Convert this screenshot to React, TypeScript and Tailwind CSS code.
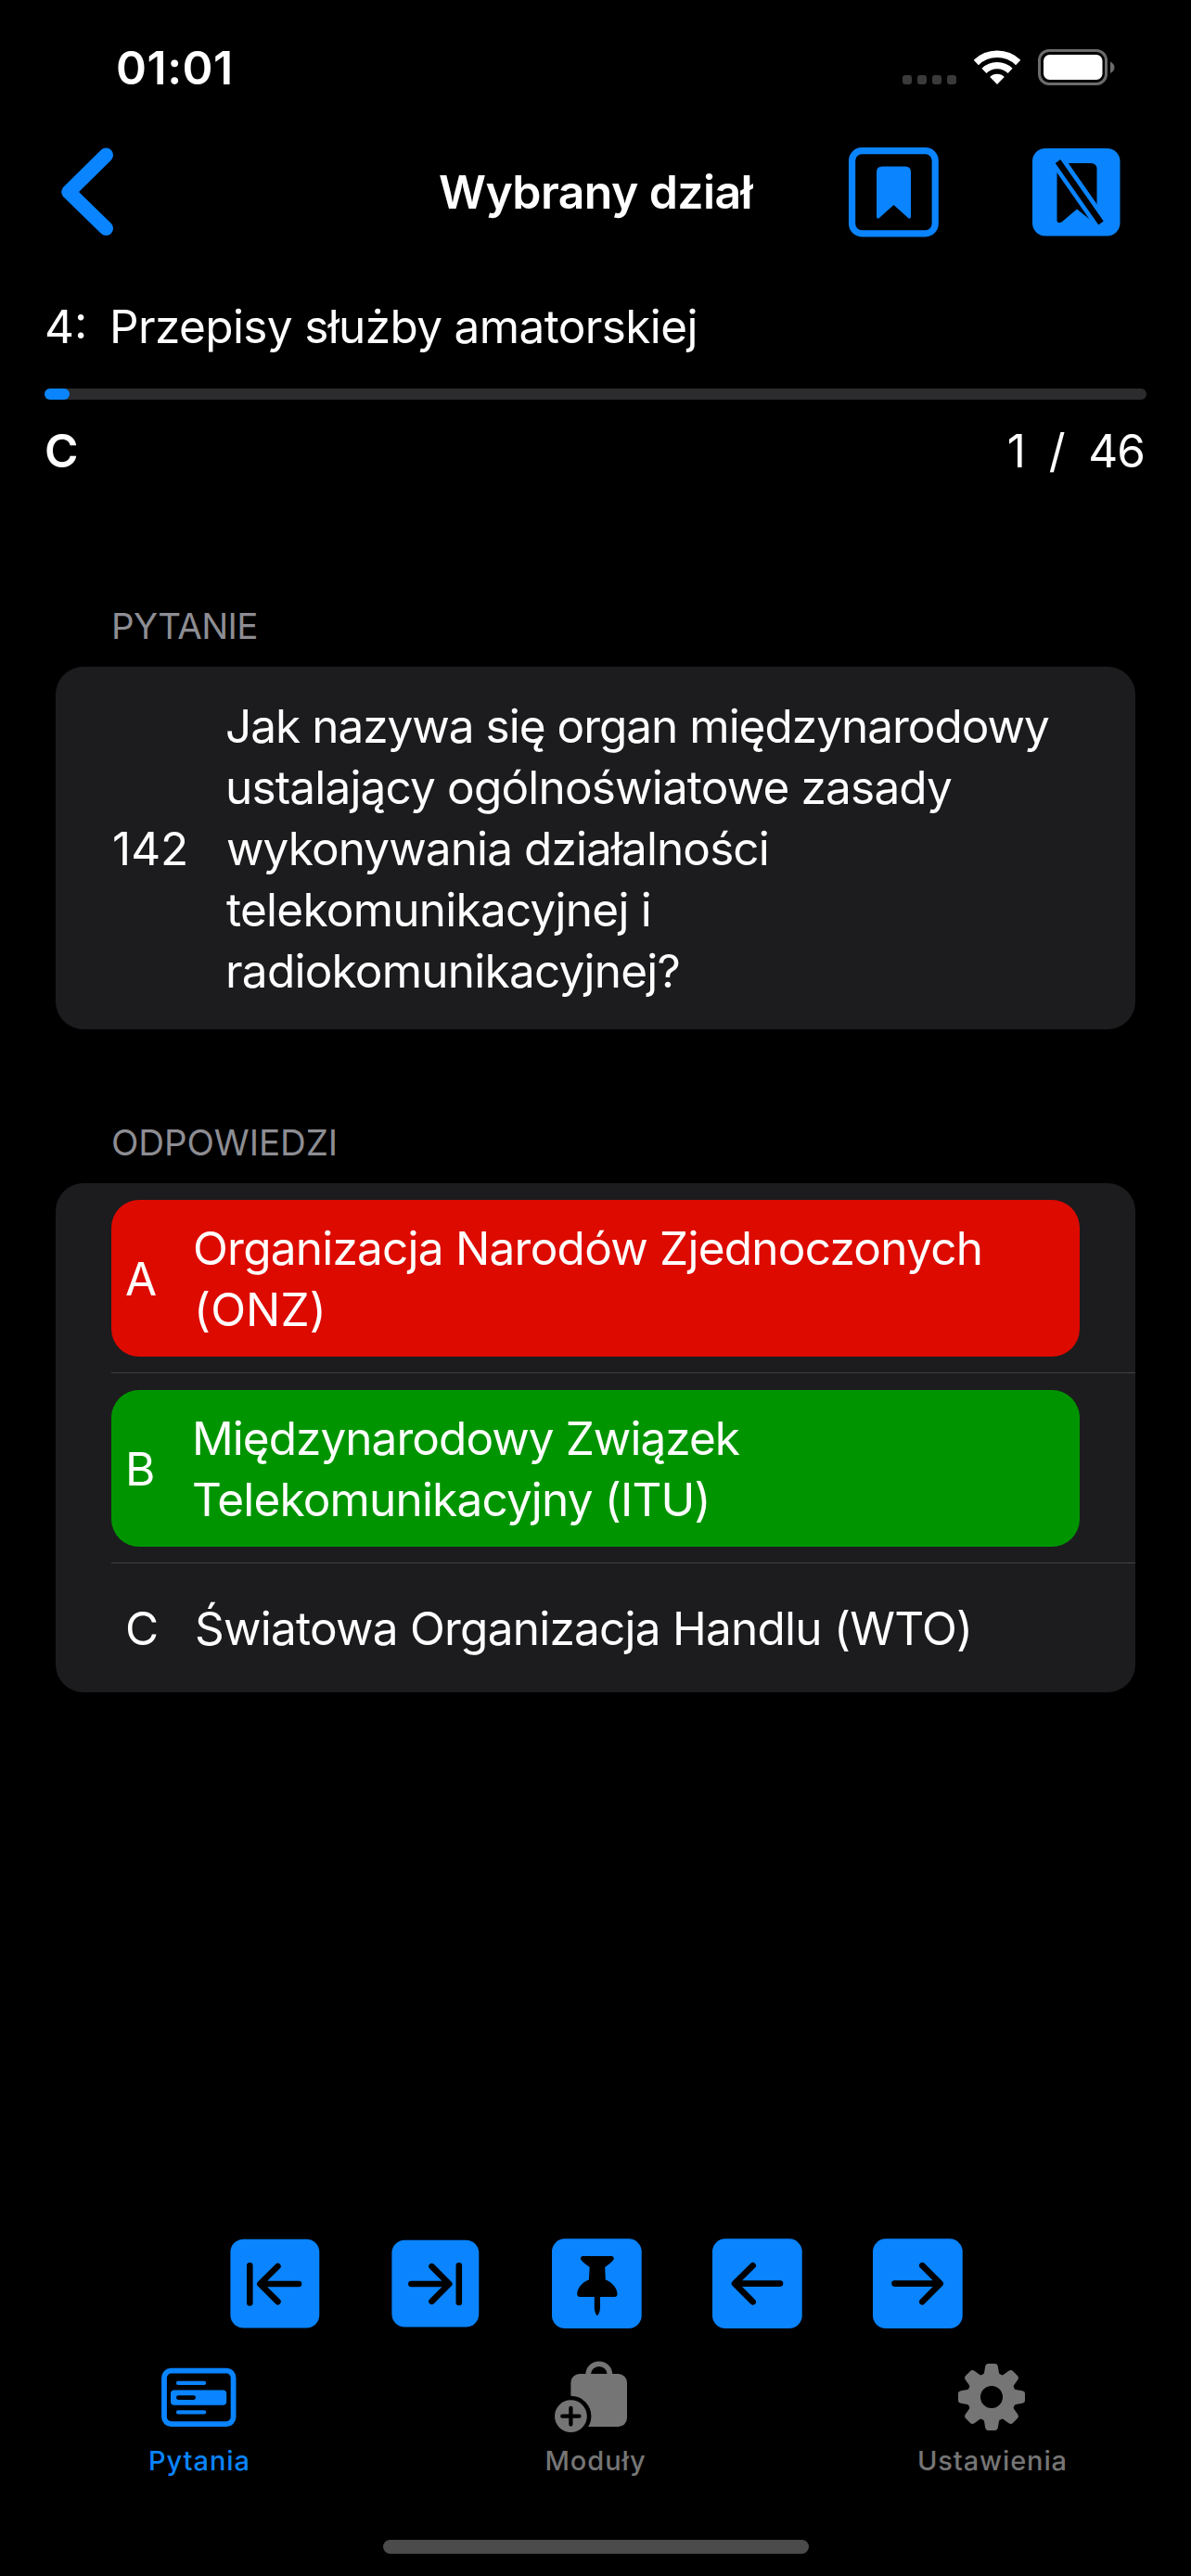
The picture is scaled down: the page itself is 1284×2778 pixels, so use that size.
import type { ReactNode } from "react";

const BLUE = "#0a84ff";
const GRAY = "#757575";

function WifiIcon() {
  return (
    <svg width="52" height="38" viewBox="0 0 52 38" fill="none" stroke="#fff">
      <path d="M3.3 13.5A32.7 32.7 0 0 1 48.7 13.5" strokeWidth="7.5" />
      <path d="M11.9 22.4A20.3 20.3 0 0 1 40.1 22.4" strokeWidth="7.2" />
      <path d="M26 37L18.2 28.9A11.3 11.3 0 0 1 33.8 28.9Z" fill="#fff" stroke="none" />
    </svg>
  );
}

function BatteryIcon() {
  return (
    <svg width="83" height="39" viewBox="0 0 83 39">
      <rect x="1.5" y="1.5" width="72" height="36" rx="10.5" fill="none" stroke="#6b6b6b" strokeWidth="3" />
      <rect x="6" y="6" width="63.5" height="27" rx="6.5" fill="#fff" />
      <path d="M78 13.5C84 16 84 23.5 78 26Z" fill="#6b6b6b" />
    </svg>
  );
}

function StatusBar() {
  return (
    <div className="flex h-[157px] items-start justify-between pt-12 pr-[82px] pl-[125px] text-white">
      <span className="text-[50px] leading-[50px] font-semibold tracking-[0.5px]">01:01</span>
      <div className="flex h-11 items-end">
        <div className="mb-px flex gap-1.5">
          {[0, 1, 2, 3].map((i) => (
            <span key={i} className="size-[10px] rounded-[3px] bg-[#3a3a3a]" />
          ))}
        </div>
        <div className="ml-[18px] flex items-end gap-[18px]">
          <WifiIcon />
          <BatteryIcon />
        </div>
      </div>
    </div>
  );
}

function BackIcon() {
  return (
    <svg width="60" height="98" viewBox="0 0 60 98" fill="none" stroke={BLUE} strokeWidth="15.5" strokeLinecap="round" strokeLinejoin="round">
      <path d="M50.3 9.3L10 49L50.3 88.3" />
    </svg>
  );
}

function BookmarkIcon() {
  return (
    <svg width="97" height="97" viewBox="0 0 97 97" fill={BLUE}>
      <rect x="3.6" y="3.6" width="89.6" height="89.2" rx="10.5" fill="none" stroke={BLUE} strokeWidth="7.2" />
      <path d="M36 20.5H61Q67 20.5 67 26.5V74Q67 78.5 63.5 75.5L48.5 62L33.5 75.5Q30 78.5 30 74V26.5Q30 20.5 36 20.5Z" />
    </svg>
  );
}

function BookmarkSlashIcon() {
  return (
    <svg width="95" height="95" viewBox="0 0 95 95">
      <rect width="94.5" height="94.5" rx="14" fill={BLUE} />
      <path d="M32.5 16H63Q69.5 16 69.5 22.5V76Q69.5 81.5 65 79L48 65.5L31.5 79.5Q26.5 82 26.5 77V22Q26.5 16 32.5 16Z" fill="#000" />
      <path d="M22.5 6.5L77.5 85.5" stroke={BLUE} strokeWidth="16" />
      <path d="M27.5 14L74 80.5" stroke="#000" strokeWidth="6.6" />
    </svg>
  );
}

function Header() {
  return (
    <header className="flex h-[100px] items-center pl-16">
      <BackIcon />
      <h1 className="ml-[349px] w-[342px] text-[50px] leading-[60px] font-semibold tracking-[-0.62px] whitespace-nowrap text-white">
        Wybrany dział
      </h1>
      <div className="ml-[100px] flex items-center gap-[101px]">
        <BookmarkIcon />
        <BookmarkSlashIcon />
      </div>
    </header>
  );
}

function Progress() {
  return (
    <section className="px-12 pt-[65px] text-[49.5px] leading-[60px] whitespace-pre text-white">
      <div className="flex">
        <span className="w-[70px]">4:</span>
        <span className="tracking-[-0.63px]">Przepisy służby amatorskiej</span>
      </div>
      <div className="mt-[37px] h-3 rounded-md bg-[#2c2c2e]">
        <div className="h-3 w-[27px] rounded-md bg-[#0a84ff]" />
      </div>
      <div className="mt-[25px] flex justify-between pr-0.5">
        <span className="font-semibold">C</span>
        <span className="tracking-[-1px]">1  /  46</span>
      </div>
    </section>
  );
}

function SectionTitle({ children }: { children: ReactNode }) {
  return <h2 className="mb-5 pl-[60px] text-[38.5px] leading-[48px] text-[#8d8d93]">{children}</h2>;
}

function Question() {
  return (
    <section className="px-[60px] pt-[135px]">
      <SectionTitle>
        <span className="tracking-[-0.6px]">PYTANIE</span>
      </SectionTitle>
      <div className="flex items-center rounded-[30px] bg-[#1c1c1e] pt-[31px] pb-[30px] pl-[61px] text-[49.5px] leading-[66px] whitespace-nowrap text-white">
        <span className="w-[122px]">142</span>
        <p className="flex flex-col">
          <span className="tracking-[-1px]">Jak nazywa się organ międzynarodowy</span>
          <span className="tracking-[-0.83px]">ustalający ogólnoświatowe zasady</span>
          <span className="pl-px tracking-[-0.9px]">wykonywania działalności</span>
          <span className="pl-px tracking-[-0.75px]">telekomunikacyjnej i</span>
          <span className="tracking-[-0.77px]">radiokomunikacyjnej?</span>
        </p>
      </div>
    </section>
  );
}

function Answers() {
  return (
    <section className="px-[60px] pt-[98px]">
      <SectionTitle>
        <span className="tracking-[-0.1px]">ODPOWIEDZI</span>
      </SectionTitle>
      <ul className="rounded-[30px] bg-[#1c1c1e] pl-[60px] text-[49.5px] leading-[66px] whitespace-nowrap text-white">
        <li className="border-b border-[#3f3f42] pt-[18px] pr-[60px] pb-[17px]">
          <div className="flex items-center rounded-[30px] bg-[#dd0a00] pt-[19px] pb-[18px] pl-[15px]">
            <span className="w-[73px]">A</span>
            <p className="flex flex-col">
              <span className="tracking-[-0.76px]">Organizacja Narodów Zjednoczonych</span>
              <span className="pl-px tracking-[0.1px]">(ONZ)</span>
            </p>
          </div>
        </li>
        <li className="border-b border-[#3f3f42] pt-[18px] pr-[60px] pb-[17px]">
          <div className="flex items-center rounded-[30px] bg-[#009500] pt-[19px] pb-[18px] pl-[15px]">
            <span className="w-[72px]">B</span>
            <p className="flex flex-col">
              <span className="tracking-[-0.95px]">Międzynarodowy Związek</span>
              <span className="tracking-[-0.83px]">Telekomunikacyjny (ITU)</span>
            </p>
          </div>
        </li>
        <li className="flex items-center pt-[37px] pb-9 pl-[15px]">
          <span className="w-[75px]">C</span>
          <span className="tracking-[-0.76px]">Światowa Organizacja Handlu (WTO)</span>
        </li>
      </ul>
    </section>
  );
}

function SquareButton({ label, inset = 0, children }: { label: string; inset?: number; children: ReactNode }) {
  return (
    <button aria-label={label}>
      <svg width="97" height="97" viewBox="0 0 97 97" fill="none" stroke="#000" strokeWidth="6.6" strokeLinecap="round" strokeLinejoin="round">
        <rect x={inset} y={inset + 0.3} width={96.7 - 2 * inset} height={96.7 - 2 * inset} rx="14" fill={BLUE} stroke="none" />
        {children}
      </svg>
    </button>
  );
}

function Controls() {
  return (
    <nav className="mt-auto flex justify-between pr-[246px] pl-[248px]">
      <SquareButton label="Pierwsze" inset={0.4}>
        <path d="M21.3 29.3V69.5M51.5 30L32.3 49L51.5 68.2M33.5 49H74" />
      </SquareButton>
      <SquareButton label="Ostatnie" inset={1.4}>
        <path d="M73.8 29.3V69M44.5 30.2L63.3 49L44.5 67.8M22.4 49H62.5" />
      </SquareButton>
      <SquareButton label="Przypnij">
        <path
          d="M33.5 19H64Q66.8 19 66.8 22Q66.8 24 57.2 31L57.8 44.5C65.5 47.5 70.5 54 70.5 60Q70.5 63 67.5 63H52V75Q51.5 81 48.9 83.3Q46.3 81 45.8 75V63H30.2Q27.2 63 27.2 60C27.2 54 32 47.5 39.9 44.5L40.7 31Q31 24 31 22Q31 19 33.5 19Z"
          fill="#000"
          stroke="none"
        />
      </SquareButton>
      <SquareButton label="Poprzednie">
        <path d="M43.7 29.2L24 48.6L43.7 68.3M25 48.6H73" />
      </SquareButton>
      <SquareButton label="Następne">
        <path d="M53.3 29.2L72.7 48.6L53.3 68.3M23.5 48.6H72" />
      </SquareButton>
    </nav>
  );
}

function QuestionsIcon() {
  return (
    <svg width="120" height="84" viewBox="0 0 120 84" fill={BLUE}>
      <rect x="23" y="14.7" width="74.6" height="57.4" rx="7.5" fill="none" stroke={BLUE} strokeWidth="5.8" />
      <rect x="36" y="25.7" width="32.2" height="4.3" rx="2" />
      <rect x="30" y="35.4" width="60.2" height="16.3" rx="4" />
      <rect x="36" y="41.3" width="21" height="4.6" rx="2.3" fill="#000" />
      <rect x="36" y="57.3" width="32.2" height="4.2" rx="2" />
    </svg>
  );
}

function ModulesIcon() {
  return (
    <svg width="120" height="84" viewBox="0 0 120 84" fill={GRAY}>
      <rect x="33.4" y="18" width="60.6" height="57" rx="9.5" />
      <path d="M52.2 20V18.5A11.6 11.3 0 0 1 75.4 18.5V20" fill="none" stroke={GRAY} strokeWidth="5.6" />
      <circle cx="33.4" cy="63.7" r="22" fill="#000" />
      <circle cx="33.4" cy="63.7" r="17.4" />
      <path d="M24.3 63.7H42.5M33.4 54.8V72.6" stroke="#000" strokeWidth="4.3" strokeLinecap="round" />
    </svg>
  );
}

function SettingsIcon() {
  return (
    <svg width="120" height="84" viewBox="0 0 120 84" fill={GRAY}>
      <g transform="translate(59 43)">
        {[0, 45, 90, 135, 180, 225, 270, 315].map((angle) => (
          <path
            key={angle}
            transform={`rotate(${angle})`}
            d="M-12 -20L-10.5 -24Q-8.5 -24 -8 -26L-6.8 -33Q-6.2 -36 -3.5 -36H3.5Q6.2 -36 6.8 -33L8 -26Q8.5 -24 10.5 -24L12 -20Z"
          />
        ))}
        <circle r="18.5" fill="none" stroke={GRAY} strokeWidth="13" />
      </g>
    </svg>
  );
}

function TabBar() {
  return (
    <nav className="mt-[31px] grid grid-cols-3 text-center text-[29px] leading-9 font-medium text-[#757575]">
      <div className="flex flex-col items-center gap-2.5 text-[#0a84ff]">
        <QuestionsIcon />
        <span className="pl-0.5 tracking-[0.95px]">Pytania</span>
      </div>
      <div className="flex flex-col items-center gap-2.5">
        <ModulesIcon />
        <span className="tracking-[0.95px]">Moduły</span>
      </div>
      <div className="flex flex-col items-center gap-2.5">
        <SettingsIcon />
        <span className="tracking-[0.88px]">Ustawienia</span>
      </div>
    </nav>
  );
}

export default function App() {
  return (
    <main className="flex h-[2778px] w-[1284px] flex-col overflow-hidden bg-black font-['Inter',sans-serif]">
      <StatusBar />
      <Header />
      <Progress />
      <Question />
      <Answers />
      <Controls />
      <TabBar />
      <div className="mt-[67px] mb-6 ml-[413px] h-[15px] w-[459px] shrink-0 rounded-full bg-[#4b4b4b]" />
    </main>
  );
}
